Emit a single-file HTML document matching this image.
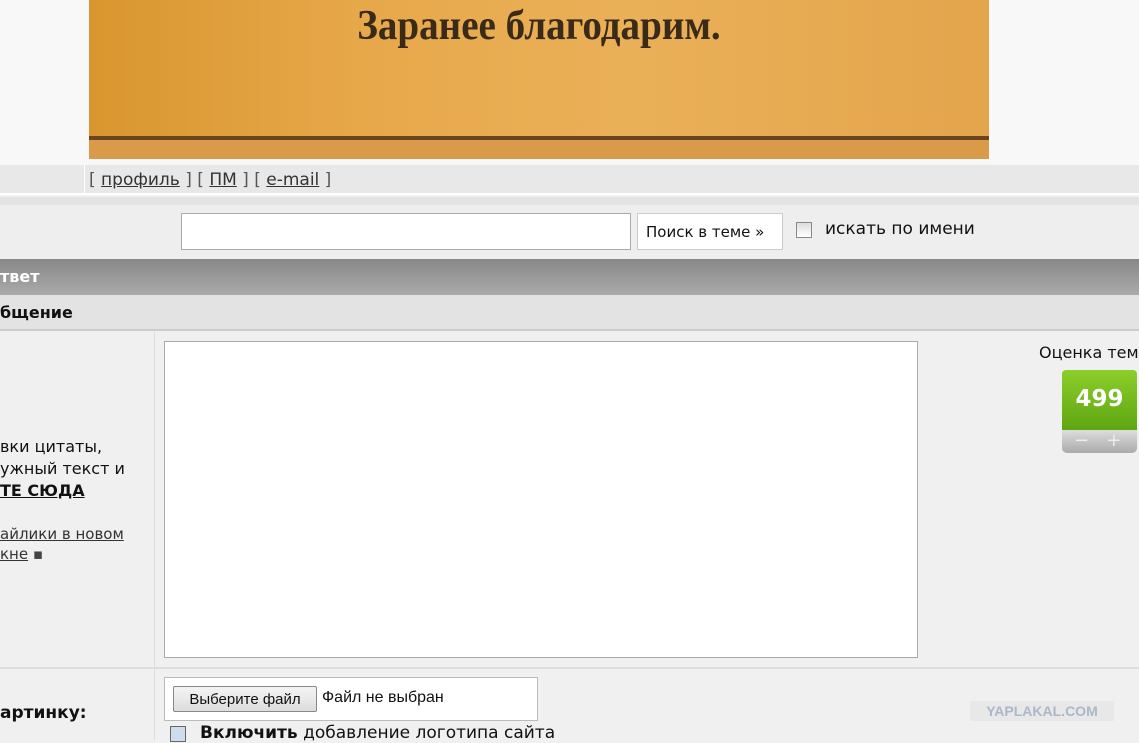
<!DOCTYPE html><html><head><meta charset="utf-8"><style>
body{margin:0;width:1139px;height:740px;overflow:hidden;background:#f0f0f0;font-family:"DejaVu Sans","Liberation Sans",sans-serif;font-size:16px;color:#111;position:relative}
div{position:absolute;box-sizing:border-box;white-space:nowrap}
a{color:#333;text-decoration:underline}
</style></head><body>
<div style="left:0;top:0;width:1139px;height:165px;background:#f8f8f8"></div>
<div style="left:89px;top:0;width:900px;height:159px;background:linear-gradient(90deg,#d9962f,#e7a84a 30%,#eab058 60%,#e3a54c);overflow:hidden">
 <div style="left:0;width:900px;font-family:'Liberation Serif',serif;font-weight:bold;font-size:42px;color:#3a2a18;text-align:center;top:2px;transform:scaleX(0.93)">Заранее благодарим.</div>
 <div style="left:0;top:136px;width:900px;height:4px;background:#6a4520"></div>
 <div style="left:0;top:140px;width:900px;height:19px;background:#d99a4a"></div>
</div>
<div style="left:0;top:165px;width:1139px;height:30px;background:#e8e8e8;border-bottom:2px solid #fff"></div>
<div style="left:84px;top:165px;width:1px;height:30px;background:#fff"></div>
<div style="left:89px;top:170px;color:#555;font-size:17px">[ <a>профиль</a> ] [ <a>ПМ</a> ] [ <a>e-mail</a> ]</div>
<div style="left:0;top:197px;width:1139px;height:8px;background:#e3e3e3"></div>
<div style="left:0;top:205px;width:1139px;height:54px;background:#eeeeee"></div>
<div style="left:181px;top:213px;width:450px;height:37px;background:#fff;border:1px solid #aaa"></div>
<div style="left:637px;top:213px;width:146px;height:37px;background:#fff;border:1px solid #ccc;padding:9px 0 0 8px;font-size:15px">Поиск в теме »</div>
<div style="left:796px;top:222px;width:16px;height:16px;border:1px solid #888;background:linear-gradient(#ddd,#fff)"></div>
<div style="left:825px;top:219px;font-size:17px">искать по имени</div>
<div style="left:0;top:259px;width:1139px;height:36px;background:linear-gradient(#888,#aaa);color:#fff;font-weight:bold;padding:8px 0 0 0;font-size:16px">твет</div>
<div style="left:0;top:295px;width:1139px;height:36px;background:#e3e3e3;border-bottom:2px solid #ccc;font-weight:bold;padding:8px 0 0 0">бщение</div>
<div style="left:154px;top:332px;width:1px;height:408px;background:#ddd"></div>
<div style="left:0;top:436px;line-height:22px;font-size:16px">вки цитаты,<br>ужный текст и<br><b><u>ТЕ СЮДА</u></b></div>
<div style="left:0;top:524px;line-height:20px;font-size:15px;color:#444"><a>айлики в новом</a><br><a>кне</a> ▪</div>
<div style="left:164px;top:341px;width:754px;height:317px;background:#fff;border:1px solid #aaa"></div>
<div style="left:1039px;top:343px">Оценка тем</div>
<div style="left:1062px;top:370px;width:75px;height:60px;background:linear-gradient(#8ccf2a,#5ea512);border-radius:4px 4px 0 0;color:#fff;font-weight:bold;font-size:23px;text-align:center;padding-top:16px">499</div>
<div style="left:1062px;top:430px;width:75px;height:23px;background:linear-gradient(#ddd,#aaa);border-radius:0 0 5px 5px;color:#eee;font-size:18px;padding-left:12px;line-height:22px">−&nbsp;&nbsp;&nbsp;+</div>
<div style="left:0;top:667px;width:1139px;height:2px;background:#ddd"></div>
<div style="left:0;top:703px;font-weight:bold;font-size:17px">артинку:</div>
<div style="left:164px;top:677px;width:374px;height:44px;background:#fff;border:1px solid #bbb"></div>
<div style="left:173px;top:686px;width:144px;height:26px;background:linear-gradient(#f4f4f4,#ddd);border:1px solid #888;border-radius:2px;font-size:15px;text-align:center;padding-top:4px;font-family:'Liberation Sans',sans-serif">Выберите файл</div>
<div style="left:322px;top:689px;font-size:16px;font-family:'Liberation Sans',sans-serif">Файл не выбран</div>
<div style="left:170px;top:726px;width:16px;height:16px;border:1px solid #666;background:#cde"></div>
<div style="left:200px;top:723px;font-size:17px"><b>Включить</b> добавление логотипа сайта</div>
<div style="left:970px;top:701px;width:144px;height:20px;background:#e8e8e8;color:#aab8c8;font-weight:bold;font-size:14px;text-align:center;padding-top:2px;font-family:'Liberation Sans',sans-serif">YAPLAKAL.COM</div>
</body></html>
